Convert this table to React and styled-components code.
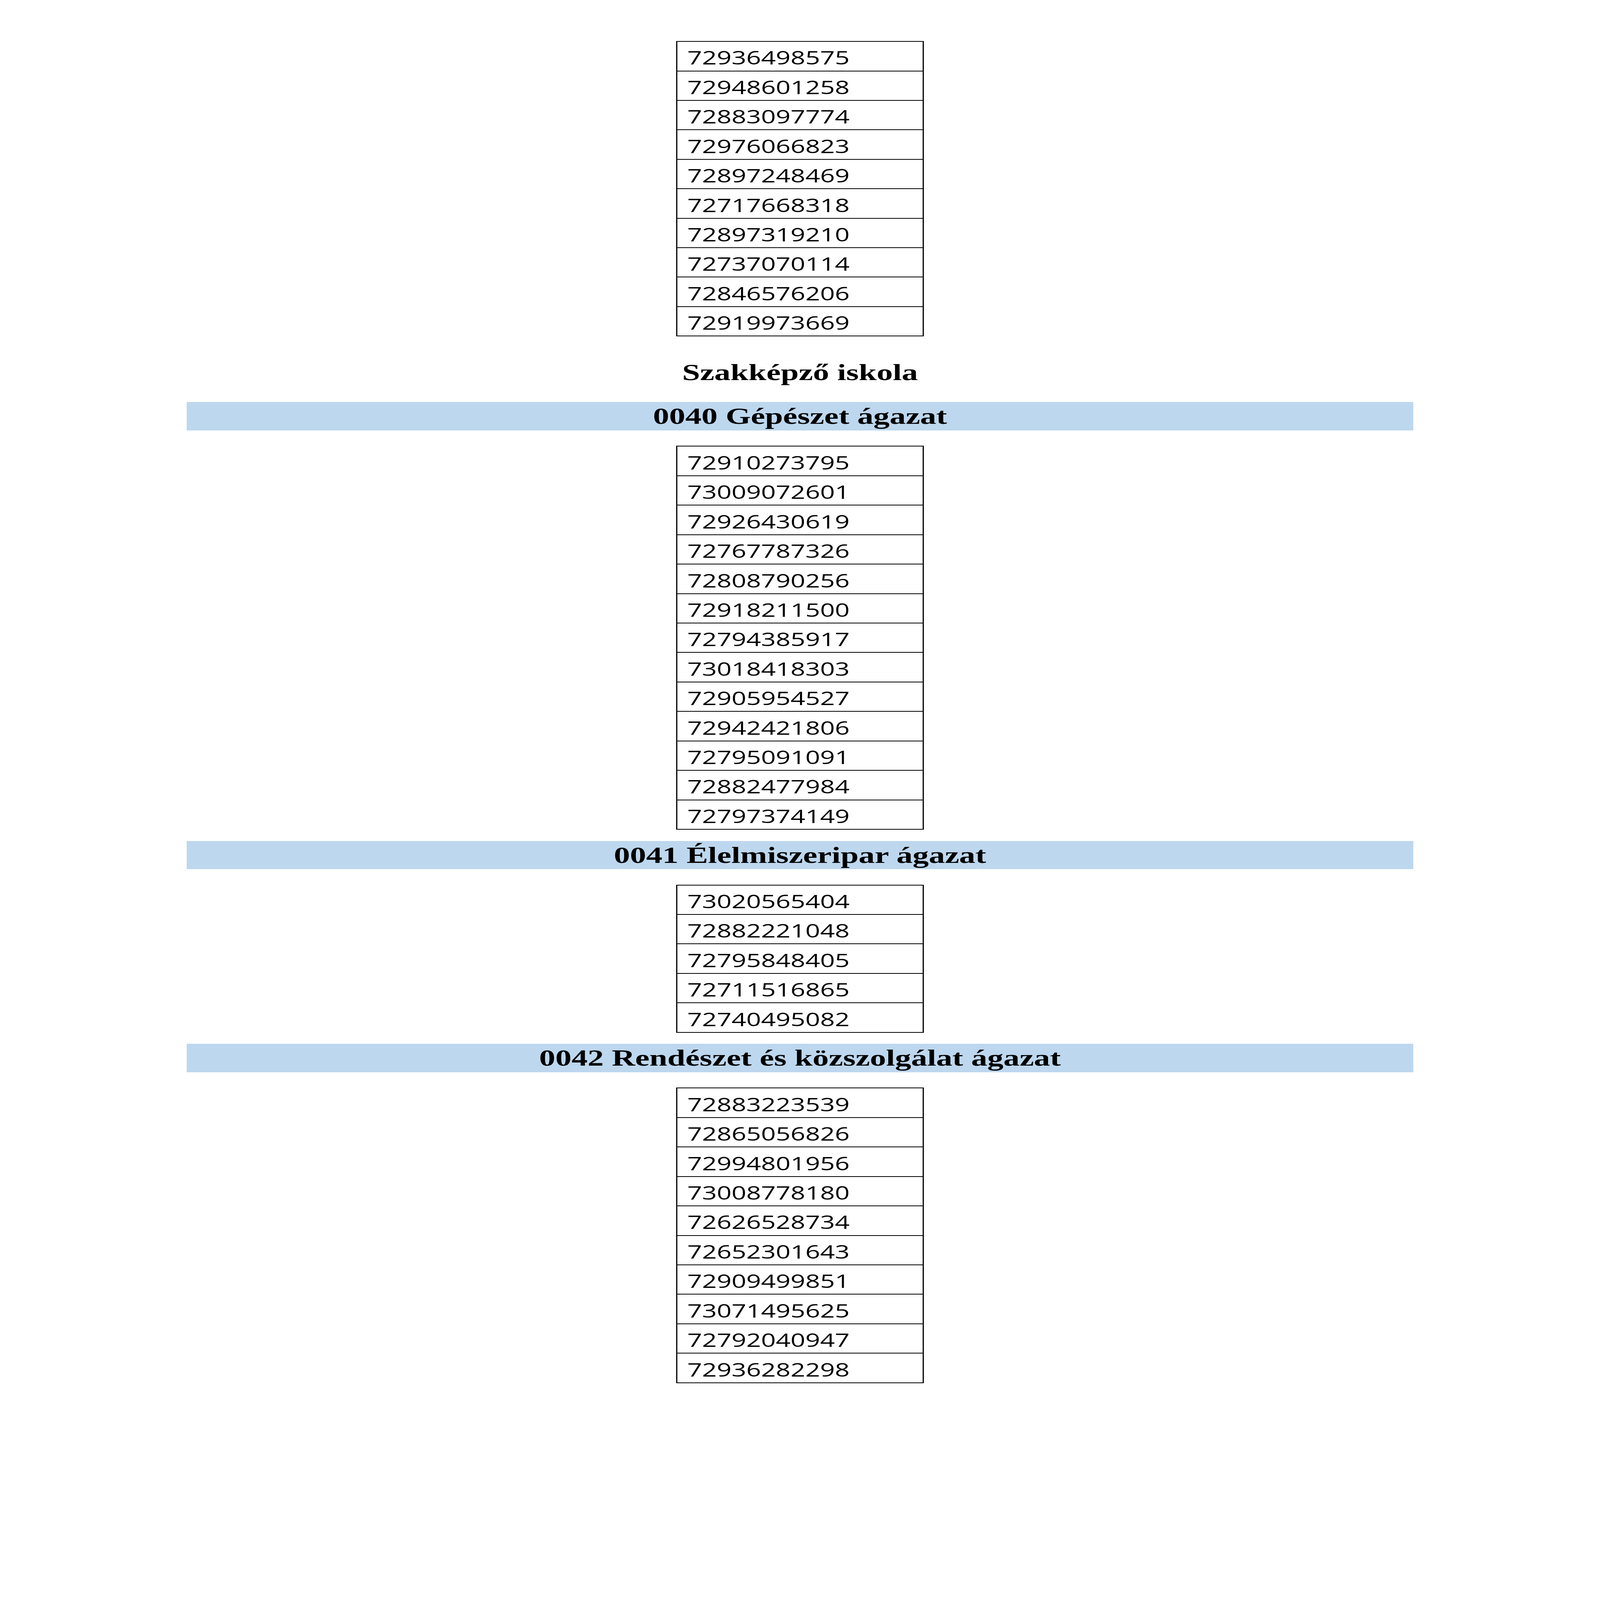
import React from 'react';
import styled, { createGlobalStyle } from 'styled-components';

// measurements come from the 4958 x 7016 sheet; map them onto the viewport
const SHEET_W = 4958;
const SHEET_H = 7016;
const x = n => `${((n * 100) / SHEET_W).toFixed(4)}vw`;
const y = n => `${((n * 100) / SHEET_H).toFixed(4)}vh`;
// glyphs are sized on the x axis, then brought to the y scale
const squash = (SHEET_W / SHEET_H).toFixed(5);

const GlobalStyle = createGlobalStyle`
  html, body {
    margin: 0;
    padding: 0;
    background: #ffffff;
    overflow: hidden;
  }
`;

const Page = styled.div`
  width: 100vw;
  height: 100vh;
  padding-top: ${y(180)};
  box-sizing: border-box;
  background: #ffffff;
  display: flex;
  flex-direction: column;
  align-items: center;
`;

const Glyphs = styled.span`
  display: inline-block;
  transform: scaleY(${squash});
  transform-origin: top left;
`;

const IdTable = styled.div`
  width: ${x(768)};
  box-sizing: border-box;
  border-left: ${x(4)} solid #000;
  border-right: ${x(4)} solid #000;
  border-bottom: ${y(4)} solid #000;
  margin-top: ${props => y(props.gap || 0)};
  display: flex;
  flex-direction: column;
`;

const IdRow = styled.div`
  height: ${y(129.2)};
  box-sizing: border-box;
  border-top: ${y(4)} solid #000;
  padding: ${y(28)} 0 0 ${x(31)};
  font-family: "Open Sans", "Liberation Sans", sans-serif;
  font-size: ${x(80)};
  line-height: ${x(80)};
  color: #000;
  white-space: nowrap;
  overflow: hidden;
`;

const SchoolTitle = styled.div`
  margin-top: ${y(101)};
  height: ${y(115)};
  font-family: "Liberation Serif", "Times New Roman", serif;
  font-weight: bold;
  font-size: ${x(100)};
  line-height: ${x(115)};
  color: #000;
  text-align: center;
  white-space: nowrap;
`;

const SectorBand = styled.div`
  width: ${x(3802)};
  height: ${y(124)};
  margin-top: ${props => y(props.gap)};
  background: #bdd7ee;
  font-family: "Liberation Serif", "Times New Roman", serif;
  font-weight: bold;
  font-size: ${x(100)};
  line-height: ${x(124)};
  color: #000;
  text-align: center;
  white-space: nowrap;
  overflow: hidden;
`;

const firstList = [
  '72936498575', '72948601258', '72883097774', '72976066823', '72897248469',
  '72717668318', '72897319210', '72737070114', '72846576206', '72919973669',
];

const sectors = [
  {
    title: '0040 Gépészet ágazat',
    gap: 72,
    ids: [
      '72910273795', '73009072601', '72926430619', '72767787326', '72808790256',
      '72918211500', '72794385917', '73018418303', '72905954527', '72942421806',
      '72795091091', '72882477984', '72797374149',
    ],
  },
  {
    title: '0041 Élelmiszeripar ágazat',
    gap: 49,
    ids: ['73020565404', '72882221048', '72795848405', '72711516865', '72740495082'],
  },
  {
    title: '0042 Rendészet és közszolgálat ágazat',
    gap: 49,
    ids: [
      '72883223539', '72865056826', '72994801956', '73008778180', '72626528734',
      '72652301643', '72909499851', '73071495625', '72792040947', '72936282298',
    ],
  },
];

const IdList = ({ ids, gap }) => (
  <IdTable gap={gap}>
    {ids.map(id => (
      <IdRow key={id}>
        <Glyphs>{id}</Glyphs>
      </IdRow>
    ))}
  </IdTable>
);

const App = () => (
  <>
    <GlobalStyle />
    <Page>
      <IdList ids={firstList} />
      <SchoolTitle>
        <Glyphs>Szakképző iskola</Glyphs>
      </SchoolTitle>
      {sectors.map(sector => (
        <React.Fragment key={sector.title}>
          <SectorBand gap={sector.gap}>
            <Glyphs>{sector.title}</Glyphs>
          </SectorBand>
          <IdList ids={sector.ids} gap={68} />
        </React.Fragment>
      ))}
    </Page>
  </>
);

export default App;
